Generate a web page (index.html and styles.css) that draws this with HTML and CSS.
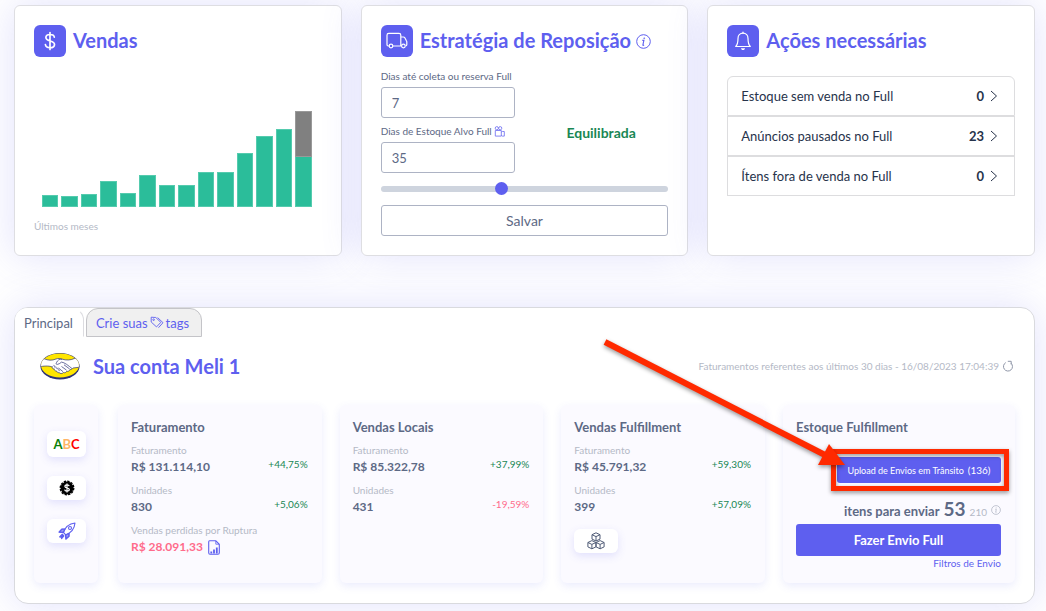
FILE: index.html
```html
<!DOCTYPE html>
<html lang="pt-BR">
<head>
<meta charset="utf-8">
<meta name="viewport" content="width=device-width, initial-scale=1">
<title>Painel de vendas</title>
<link rel="stylesheet" href="styles.css">
</head>
<body>
<main class="page">
  <div class="top-grid">
    <section class="card">
      <header class="card-head">
        <span class="badge-icon">
          <svg width="20" height="22" viewBox="0 0 20 22" fill="none" stroke="#fff" stroke-width="1.7" stroke-linecap="round"><path d="M10 2.5v17M14.3 7.2C14.1 5.4 12.500 4.500 10 4.500S5.900 5.600 5.900 7.600c0 4.500 8.600 2.200 8.600 6.800 0 2.100-1.800 3.300-4.500 3.300s-4.400-1.200-4.600-3.200"/></svg>
        </span>
        <h2 class="title">Vendas</h2>
      </header>
      <div class="chart">
        <div class="bar" style="height:12px"></div>
        <div class="bar" style="height:11px"></div>
        <div class="bar" style="height:13px"></div>
        <div class="bar" style="height:26px"></div>
        <div class="bar" style="height:14px"></div>
        <div class="bar" style="height:32px"></div>
        <div class="bar" style="height:22px"></div>
        <div class="bar" style="height:22px"></div>
        <div class="bar" style="height:35px"></div>
        <div class="bar" style="height:35px"></div>
        <div class="bar" style="height:54px"></div>
        <div class="bar" style="height:71px"></div>
        <div class="bar" style="height:78px"></div>
        <div class="bar bar-stack" style="height:96px"><div class="bar-forecast" style="height:46px"></div></div>
      </div>
      <p class="caption">Últimos meses</p>
    </section>

    <section class="card">
      <header class="card-head">
        <span class="badge-icon">
          <svg width="22" height="18" viewBox="0 0 22 18" fill="none" stroke="#fff" stroke-width="1.2" stroke-linejoin="round"><path d="M3.300 14H2.200A1.200 1.200 0 0 1 1 12.800V3.200A1.800 1.800 0 0 1 2.800 1.400H13a1.800 1.800 0 0 1 1.800 1.800V14H6.800M14.800 5h2.600c.6 0 1.100.3 1.400.8l1.600 3c.3.500.4.800.4 1.300v2.700c0 .7-.5 1.200-1.200 1.200M14.800 14h.9"/><circle cx="5" cy="14" r="1.800"/><circle cx="17.400" cy="14" r="1.800"/></svg>
        </span>
        <h2 class="title">Estratégia de Reposição</h2>
        <svg class="info-lg" width="15" height="15" viewBox="0 0 15 15" fill="none" stroke="#5e5fef"><circle cx="7.500" cy="7.500" r="6.800"/><path d="M6.300 6.400h1.600L6.900 10.800c-.1.600.3.800 1.200.3" stroke-width="1.100"/><circle cx="8.200" cy="4.200" r=".5" fill="#5e5fef" stroke-width=".6"/></svg>
      </header>
      <form class="strategy" onsubmit="return false">
        <div class="strategy-top">
          <div class="fields">
            <label class="field-label" for="coleta">Dias até coleta ou reserva Full</label>
            <input class="field" id="coleta" type="text" value="7">
            <label class="field-label field-next" for="alvo">Dias de Estoque Alvo Full
              <svg width="11" height="11" viewBox="0 0 11 11" fill="none" stroke="#7778f2" stroke-width=".9"><circle cx="2.800" cy="2.200" r="1.600"/><circle cx="6.200" cy="2.200" r="1.600"/><path d="M1.300 4.500h6v5.600h-6zM7.300 6.200l1-.7h2v4.600H8.300l-1-.8"/></svg>
            </label>
            <input class="field" id="alvo" type="text" value="35">
          </div>
          <p class="status">Equilibrada</p>
        </div>
        <input class="slider" type="range" min="10" max="70" value="35" aria-label="Dias de estoque alvo">
        <button class="save" type="submit">Salvar</button>
      </form>
    </section>

    <section class="card">
      <header class="card-head">
        <span class="badge-icon">
          <svg width="18" height="20" viewBox="0 0 18 20" fill="none" stroke="#fff" stroke-width="1.200" stroke-linejoin="round"><path d="M9 2.200C6 2.200 4 4.500 4 7.400c0 4-.8 6.500-2.300 8.100h14.600C14.800 13.900 14 11.400 14 7.400c0-2.900-2-5.200-5-5.200z"/><path d="M7 17.200h4c0 2.400-4 2.400-4 0z" fill="#fff" stroke="none"/><path d="M9 2.200V1" stroke-linecap="round"/></svg>
        </span>
        <h2 class="title">Ações necessárias</h2>
      </header>
      <div class="actions">
        <a class="action" href="#"><span>Estoque sem venda no Full</span><b>0</b><svg width="8" height="14" viewBox="0 0 8 14" fill="none" stroke="#27334b"><path d="M1 2l5.500 5L1 12"/></svg></a>
        <a class="action" href="#"><span>Anúncios pausados no Full</span><b>23</b><svg width="8" height="14" viewBox="0 0 8 14" fill="none" stroke="#27334b"><path d="M1 2l5.500 5L1 12"/></svg></a>
        <a class="action" href="#"><span>Ítens fora de venda no Full</span><b>0</b><svg width="8" height="14" viewBox="0 0 8 14" fill="none" stroke="#27334b"><path d="M1 2l5.500 5L1 12"/></svg></a>
      </div>
    </section>
  </div>

  <section class="panel">
    <nav class="tabs">
      <a class="tab tab-active" href="#">Principal</a>
      <a class="tab" href="#">Crie suas
        <svg width="14" height="13" viewBox="0 0 14 13" fill="none" stroke="#5e5fef" stroke-width=".9" stroke-linejoin="round"><path d="M1.200 1.200l4.600.3 5 4.900-4.300 4.500L1.200 6z"/><path d="M7.600 1.600l5.400 5.100-4.500 5"/><circle cx="3.600" cy="3.700" r=".8"/></svg>tags</a>
    </nav>

    <header class="account">
      <svg class="logo" width="40" height="28" viewBox="0 0 40 28">
        <defs><clipPath id="oval"><ellipse cx="20" cy="13.500" rx="18.900" ry="11.900"/></clipPath></defs>
        <ellipse cx="20" cy="14.200" rx="19.600" ry="13.200" fill="#2d3277"/>
        <ellipse cx="20" cy="13.500" rx="18.900" ry="11.900" fill="#ffe600"/>
        <g clip-path="url(#oval)">
          <path d="M0 7l4-.3c4 1.800 8 2 12 .3 2-.8 4-.6 6 .1 4 1.400 9 1.200 13-.9l5 1v8l-7 .8c-1 1.200-2 1.600-3 1.600-.7 1.600-2 2-3.300 1.700-.6 1.300-1.900 1.700-3.200 1.200-1.600 1.700-3.500 1.200-4.300.1-1.400.3-2.300-.5-2.500-1.600-1.700.1-2.600-.9-2.400-2.100-1.500.1-2.400-.8-2.100-2-2.500-.9-6-1.200-12.200-.3z" fill="#fff" stroke="#2d3277" stroke-width=".7"/>
          <path d="M22 7.300c-2.500-.6-4.500 1-5.500 3.300-.8 1.300-.2 2 1 1.800 1.800-.3 2.900-1.500 4-2.300 3 .3 7 3.500 10.500 6.500M21.500 14.500l5 3.600M24 12.800l5.700 4.200M18.500 16l4.500 3.700" fill="none" stroke="#2d3277" stroke-width=".7"/>
          <path d="M12.300 14.800l1.500-1.500 1 .6-.3 1.300 1.600-.3.300 1.500 1.600-.1.100 1.500 1.300.2-.3 1.200" fill="none" stroke="#2d3277" stroke-width=".5"/>
        </g>
      </svg>
      <h2 class="title">Sua conta Meli 1</h2>
      <p class="updated">Faturamentos referentes aos últimos 30 dias - 16/08/2023 17:04:39</p>
      <button class="refresh" type="button" aria-label="Atualizar"><svg width="12" height="13" viewBox="0 0 12 13" fill="none" stroke="#8f96a8" stroke-width="1"><path d="M3.800 2.600A4.500 4.500 0 1 0 9 3.200"/><path d="M5.800 1.300h3.400v3.200"/></svg></button>
    </header>

    <div class="metrics">
      <div class="tile shortcuts">
        <button class="chip chip-abc" type="button"><span class="abc-a">A</span><span class="abc-b">B</span><span class="abc-c">C</span></button>
        <button class="chip" type="button" aria-label="Preços"><svg width="16" height="16" viewBox="0 0 16 16"><circle cx="8" cy="8" r="6.500"/><circle cx="8" cy="8" r="6.800" fill="none" stroke="#000" stroke-width="1.300" stroke-dasharray="2.400 1.160"/><path d="M8 3.600v8.800M10.200 6.200C10 5.200 9.200 4.900 8 4.900s-2.100.5-2.100 1.500c0 2.200 4.400 1 4.400 3.200 0 1-1 1.500-2.300 1.500s-2.200-.4-2.400-1.500" fill="none" stroke="#fff" stroke-width="1.200"/></svg></button>
        <button class="chip" type="button" aria-label="Impulsionar"><svg width="18" height="18" viewBox="0 0 18 18" fill="none" stroke="#5e5fef" stroke-width="1.100" stroke-linejoin="round"><path d="M5.500 10.500C7 5.500 11 1.800 17 1c-.6 6-4.200 10-9.300 11.800z"/><path d="M7 7H3.800L1 10.200l4.200.2M11 11l.1 3.300-3.200 2.800-.4-4.200"/><circle cx="12" cy="6" r="1.500"/><path d="M4.300 12.200l1.600 1.700-2.300 2.800-.3-1.500-1.700-.3z" fill="#5e5fef"/><path d="M4 7.200L1.300 10l3.900.2L7 7.300zM11 11.200l-.2 3-2.700 2.600-.3-3.800z" fill="#5e5fef" fill-opacity=".6"/></svg></button>
      </div>

      <div class="tile">
        <h3 class="tile-title">Faturamento</h3>
        <div class="metric"><span class="label">Faturamento</span><div class="metric-row"><b>R$ 131.114,10</b><span class="up">+44,75%</span></div></div>
        <div class="metric"><span class="label">Unidades</span><div class="metric-row"><b>830</b><span class="up">+5,06%</span></div></div>
        <div class="metric"><span class="label">Vendas perdidas por Ruptura</span><div class="metric-row lost"><b>R$ 28.091,33</b><svg width="12" height="15" viewBox="0 0 12 15" fill="none" stroke="#5e5fef" stroke-width="1.100"><path d="M1.500.8h6.300L11.300 4.300v8.500c0 .9-.5 1.400-1.300 1.400H2c-.8 0-1.300-.5-1.300-1.400V1.900C.7 1.200 1 .8 1.500.8z"/><path d="M7.800 1v3.200h3.200" stroke-width=".8"/><path d="M3.300 13.500v-2M6 13.500V9.500M8.800 13.500v-6" stroke-width="1.800"/></svg></div></div>
      </div>

      <div class="tile">
        <h3 class="tile-title">Vendas Locais</h3>
        <div class="metric"><span class="label">Faturamento</span><div class="metric-row"><b>R$ 85.322,78</b><span class="up">+37,99%</span></div></div>
        <div class="metric"><span class="label">Unidades</span><div class="metric-row"><b>431</b><span class="down">-19,59%</span></div></div>
      </div>

      <div class="tile">
        <h3 class="tile-title">Vendas Fulfillment</h3>
        <div class="metric"><span class="label">Faturamento</span><div class="metric-row"><b>R$ 45.791,32</b><span class="up">+59,30%</span></div></div>
        <div class="metric"><span class="label">Unidades</span><div class="metric-row"><b>399</b><span class="up">+57,09%</span></div></div>
        <button class="chip chip-boxes" type="button" aria-label="Estoque"><svg width="18" height="18" viewBox="0 0 18 18" fill="none" stroke="#4f5b76" stroke-width="1" stroke-linejoin="round"><path d="M9 .8l4 1.900v4.400L9 9 5 7.100V2.700zM5 2.700l4 1.900 4-1.900M9 4.600V9"/><path d="M4.900 8.600l4 1.900v4.400l-4 1.900-4-1.900v-4.400zM.9 10.500l4 1.900 4-1.900M4.900 12.400v4.400M13.100 8.600l4 1.900v4.400l-4 1.900-4-1.900v-4.400zM9.100 10.500l4 1.900 4-1.900M13.100 12.400v4.400"/></svg></button>
      </div>

      <div class="tile stock">
        <h3 class="tile-title">Estoque Fulfillment</h3>
        <div class="upload-wrap">
          <button class="upload" type="button"><span>Upload de Envios em Trânsito</span><span class="count">(136)</span></button>
          <div class="highlight"></div>
          <svg class="arrow" width="244" height="134" viewBox="0 0 244 134"><path d="M4 3L226 117" stroke="#ff2a00" stroke-width="6"/><path d="M228 105l16 21-27 0z" fill="#ff2a00"/></svg>
        </div>
        <p class="to-send"><b>itens para enviar</b><strong>53</strong><span>210</span><svg width="10" height="10" viewBox="0 0 10 10" fill="none" stroke="#b4b9c6" stroke-width=".8"><circle cx="5" cy="5" r="4.400"/><path d="M4.300 4.300h1L4.700 7.300h.8"/><path d="M5.200 2.500v.8"/></svg></p>
        <button class="send" type="button">Fazer Envio Full</button>
        <a class="filters" href="#">Filtros de Envio</a>
      </div>
    </div>
  </section>
</main>
</body>
</html>
```

FILE: styles.css
```css
* {
  box-sizing: border-box;
}

body {
  margin: 0;
  background: #fff;
  color: #5d6985;
  font-family: Lato, "Open Sans", sans-serif;
  font-size: 13px;
}

h2, h3, p {
  margin: 0;
}

button, input {
  font-family: inherit;
  color: inherit;
}

button {
  border: 0;
  padding: 0;
  cursor: pointer;
}

a {
  color: #5e5fef;
  text-decoration: none;
}

svg {
  display: block;
  flex: none;
}

.page {
  padding: 5px 11px 7px 14px;
  overflow: hidden;
}

.top-grid {
  display: grid;
  grid-template-columns: repeat(3, 1fr);
  gap: 19px;
}

.card,
.panel {
  background: #fff;
  box-shadow: 0 0 40px rgba(94, 95, 239, 0.19);
}

.card {
  border: 1px solid #dedee2;
  border-radius: 6px;
  padding: 19px;
}

.card-head {
  display: flex;
  align-items: center;
  height: 32px;
}

.badge-icon {
  display: flex;
  align-items: center;
  justify-content: center;
  flex: none;
  width: 32px;
  height: 32px;
  margin-right: 7px;
  border-radius: 6px;
  background: #5e5fef;
}

.title {
  font-size: 20px;
  line-height: 24px;
  font-weight: 700;
  color: #5e5fef;
  white-space: nowrap;
}

.card-head .title {
  padding-bottom: 2px;
}

.info-lg {
  margin-left: 5px;
}

/* Sales chart */
.chart {
  display: flex;
  align-items: flex-end;
  gap: 3px;
  height: 150px;
  margin: 0 10px 0 8px;
}

.bar {
  flex: 1;
  background: #2bbd9a;
  border: 1px solid #55cbae;
}

.bar-stack {
  border-top: 0;
}

.bar-forecast {
  margin: 0 -1px;
  background: #808080;
  border: 1px solid #999;
}

.caption {
  margin-top: 12px;
  font-size: 10px;
  line-height: 14px;
  color: #b4b9c6;
}

/* Replenishment form */
.strategy {
  margin-top: 12px;
}

.strategy-top {
  display: grid;
  grid-template-columns: 1fr 1fr;
  column-gap: 19px;
}

.fields {
  display: flex;
  flex-direction: column;
}

.field-label {
  display: flex;
  align-items: center;
  gap: 2px;
  margin-bottom: 4px;
  font-size: 10px;
  line-height: 14px;
  white-space: nowrap;
}

.field-next {
  margin-top: 6px;
}

.field {
  width: 100%;
  height: 31px;
  padding: 0 10px;
  border: 1px solid #adb3c4;
  border-radius: 3px;
  background: #fff;
  font-size: 13px;
}

.status {
  display: flex;
  align-items: center;
  justify-content: center;
  padding-top: 22px;
  font-size: 14px;
  font-weight: 700;
  color: #198754;
}

.slider {
  display: block;
  width: 100%;
  height: 13px;
  margin: 9px 0 10px;
  appearance: none;
  background: transparent;
}

.slider::-webkit-slider-runnable-track {
  height: 6px;
  border-radius: 3px;
  background: #ced4de;
}

.slider::-webkit-slider-thumb {
  appearance: none;
  width: 13px;
  height: 13px;
  margin-top: -4px;
  border-radius: 50%;
  background: #5e5fef;
}

.save {
  width: 100%;
  height: 31px;
  border: 1px solid #adb3c4;
  border-radius: 3px;
  background: #fff;
  font-size: 14px;
}

/* Required actions */
.actions {
  margin-top: 19px;
}

.action {
  display: flex;
  align-items: center;
  height: 40px;
  padding: 0 16px 0 13px;
  border: 1px solid #dddddf;
  color: #27334b;
}

.action:first-child {
  border-radius: 6px 6px 0 0;
}

.action span {
  flex: 1;
}

.action svg {
  margin-left: 6px;
}

/* Account panel */
.panel {
  margin-top: 51px;
  padding-bottom: 20px;
  border: 1px solid #d9dade;
  border-radius: 14px;
}

.tabs {
  display: flex;
  gap: 2px;
}

.tab {
  display: flex;
  align-items: center;
  gap: 2px;
  height: 29px;
  padding: 0 12px 0 9px;
  border: 1px solid #c4c4c8;
  border-radius: 12px 12px 0 0;
  background: #f0f0f0;
}

.tab-active {
  padding: 0 10px 0 8px;
  border-color: transparent #dcdce0 transparent transparent;
  background: #fff;
  color: #5d6985;
}

.account {
  display: flex;
  align-items: center;
  height: 40px;
  margin: 9px 20px 19px 25px;
}

.account .title {
  margin-left: 13px;
}

.updated {
  margin-left: auto;
  font-size: 10px;
  color: #b4b9c6;
}

.refresh {
  margin-left: 3px;
  background: transparent;
}

.metrics {
  display: grid;
  grid-template-columns: 66px repeat(3, 1fr) 232px;
  gap: 18px;
  padding: 0 19px;
}

.tile {
  min-height: 178px;
  padding: 12px 14px 13px 13px;
  border-radius: 6px;
  background: #fbfaff;
  box-shadow: 0 3px 8px rgba(94, 95, 239, 0.12);
}

.shortcuts {
  display: flex;
  flex-direction: column;
  gap: 19px;
  margin-right: 2px;
  padding: 26px 12px 26px 13px;
}

.chip {
  display: flex;
  align-items: center;
  justify-content: center;
  height: 24px;
  border-radius: 6px;
  background: #fff;
  box-shadow: 0 3px 8px rgba(94, 95, 239, 0.16);
}

.chip-abc {
  height: 26px;
  font-size: 13px;
  font-weight: 700;
}

.abc-a {
  color: #087f08;
}

.abc-b {
  color: #ffb566;
}

.abc-c {
  color: #f00;
}

.chip-boxes {
  width: 44px;
  margin-top: 12px;
}

.tile-title {
  font-size: 13px;
  line-height: 20px;
  font-weight: 700;
}

.metric {
  margin-top: 6px;
}

.label {
  display: block;
  font-size: 10px;
  line-height: 14px;
  color: #b4b9c6;
}

.metric-row {
  display: flex;
  justify-content: space-between;
  font-size: 12px;
  line-height: 20px;
}

.up, .down {
  font-size: 10px;
  line-height: 14px;
}

.up {
  color: #198754;
}

.down, .lost {
  color: #ff6b8b;
}

.lost {
  justify-content: flex-start;
  align-items: center;
  gap: 5px;
}

/* Fulfillment stock */
.stock {
  display: flex;
  flex-direction: column;
}

.upload-wrap {
  position: relative;
  align-self: flex-end;
  margin-top: 20px;
}

.upload {
  display: flex;
  align-items: center;
  justify-content: center;
  gap: 4px;
  min-width: 164px;
  height: 26px;
  border-radius: 3px;
  background: #5e5fef;
  color: #fff;
  font-size: 9px;
}

.count {
  font-size: 10px;
}

.highlight {
  position: absolute;
  inset: -8px -8px -8px -6px;
  border: 5px solid #ff2a00;
  filter: drop-shadow(0 2px 2px rgba(0, 0, 0, 0.4));
  pointer-events: none;
}

.arrow {
  position: absolute;
  top: -118px;
  right: calc(100% - 8px);
  filter: drop-shadow(0 2px 2px rgba(0, 0, 0, 0.4));
  pointer-events: none;
}

.to-send {
  display: flex;
  align-items: baseline;
  justify-content: flex-end;
  gap: 4px;
  height: 28px;
  margin-top: 13px;
  line-height: 26px;
}

.to-send strong {
  font-size: 19px;
}

.to-send span {
  font-size: 10px;
  color: #b4b9c6;
}

.to-send svg {
  align-self: center;
}

.send {
  height: 32px;
  border-radius: 3px;
  background: #5e5fef;
  color: #fff;
  font-size: 13px;
  font-weight: 700;
}

.filters {
  align-self: flex-end;
  font-size: 10px;
  line-height: 14px;
}
```
